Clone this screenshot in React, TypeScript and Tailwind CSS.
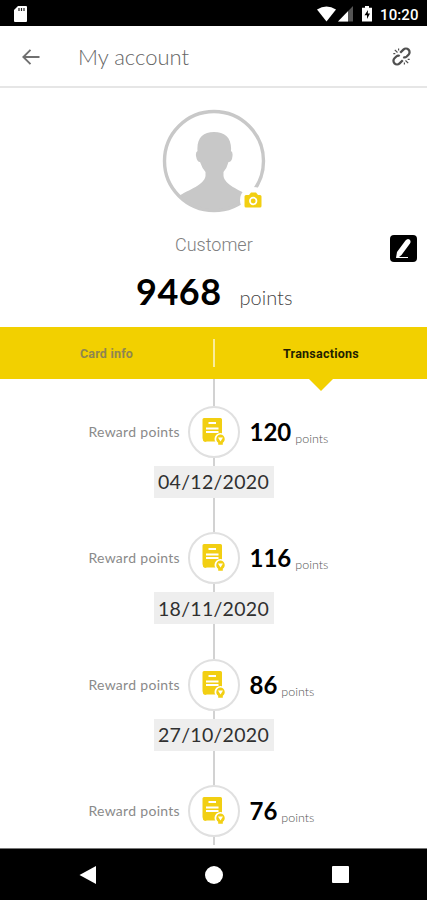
type Transaction = { points: number; date?: string };

const transactions: Transaction[] = [
  { points: 120, date: "04/12/2020" },
  { points: 116, date: "18/11/2020" },
  { points: 86, date: "27/10/2020" },
  { points: 76 },
];

function StatusBar() {
  return (
    <div className="flex h-[26px] shrink-0 items-center bg-black pl-[14px] pr-[8px] text-white">
      <svg width="13" height="16" viewBox="0 0 13 16" className="mt-[2px]">
        <path d="M4 0H12Q13 0 13 1V15Q13 16 12 16H1Q0 16 0 15V4Z" fill="#fff" />
        <path d="M5 2v3M7.5 2v3M10 2v3" stroke="#222" strokeWidth="1.2" />
      </svg>
      <svg width="56" height="17" viewBox="0 0 56 17" className="ml-auto mt-[2px]">
        <path d="M0 3.5Q9.5 -2.5 19 3.5L9.5 15.5Z" fill="#fff" />
        <path d="M36 0V15.5H21Z" fill="#555" />
        <path d="M31 5.2V15.5H21Z" fill="#fff" />
        <path d="M48 0h4v1.8h3V15.5H45V1.8h3Z" fill="#fff" />
        <path d="M51 4L47.5 9.3H50V13L53 7.6H50.8Z" fill="#000" />
      </svg>
      <span className="ml-[7px] mt-[3px] w-[39px] whitespace-nowrap font-['Roboto'] text-[15px] font-medium leading-[26px] tracking-[0.1px]">
        10:20
      </span>
    </div>
  );
}

function Header() {
  return (
    <header className="flex h-[62px] shrink-0 items-center border-b-2 border-[#e6e6e6] pl-[22px] pr-[15px] text-[#666]">
      <svg width="18" height="16" viewBox="0 0 18 16" fill="none" stroke="#707070" strokeWidth="1.9" className="mt-[2px]">
        <path d="M17.500 8H1.500M8.500 .8L1.300 8L8.500 15.200" />
      </svg>
      <h1 className="ml-[38px] mt-[2px] text-[22px] font-light leading-[30px]">My account</h1>
      <svg
        width="21"
        height="21"
        viewBox="0 0 21 21"
        fill="none"
        stroke="#505050"
        strokeWidth="2.3"
        className="ml-auto mt-[1px]"
      >
        <path d="M9.200 6.800L12.400 3.600A3.600 3.600 0 0 1 17.500 8.700L15.700 10.500Q14 12 12.300 11M11.800 14.200L8.600 17.400A3.600 3.600 0 0 1 3.500 12.300L5.300 10.500Q7 9 8.700 10" />
        <path d="M3.800 3.800L6.500 6.500M7.600 2.500V4.500M2.300 7.600H4.300M14.500 14.500L17.200 17.200M13.400 16.500V18.500M16.700 13.400H18.700" strokeWidth="1.2" />
      </svg>
    </header>
  );
}

function Avatar() {
  return (
    <svg width="104" height="104" viewBox="0 0 104 104" className="mx-auto block">
      <defs>
        <clipPath id="avatar">
          <circle cx="52" cy="52" r="50" />
        </clipPath>
      </defs>
      <path
        clipPath="url(#avatar)"
        fill="#c8c8c8"
        d="M52 23C63 23 70 29 69 42Q71 43 70.500 47Q70 53 66.500 53Q65 59 61.500 63V67C63 76 76 80 89 88V104H15V88C28 80 42 76 43.500 67V63Q40 59 38 53Q35 53 34 47Q33.500 43 35.500 42C34.500 29 41 23 52 23Z"
      />
      <circle cx="52" cy="52" r="49.500" fill="none" stroke="#c8c8c8" strokeWidth="3.400" />
      <circle cx="91" cy="91" r="13" fill="#fff" />
      <path d="M84 86h3l2-2.500h5l2 2.500h2q1.500 0 1.500 1.500V97q0 1.500-1.500 1.500H84q-1.500 0-1.500-1.500V87.500Q82.500 86 84 86Z" fill="#f2cf12" />
      <circle cx="91.200" cy="92" r="3.300" fill="none" stroke="#fff" strokeWidth="1.700" />
    </svg>
  );
}

function ReceiptIcon() {
  return (
    <svg width="24" height="28" viewBox="0 0 24 28">
      <path d="M2 0H18.500Q20 0 20 1.500V24L17 23.500H5L3 24Q0.500 23 0.500 20V1.500Q0.500 0 2 0Z" fill="#f2cf12" />
      <path d="M6.500 5H14M4 10.500H16.500M4 14H16.500" stroke="#fff" strokeWidth="2" />
      <circle cx="18.500" cy="21" r="6" fill="#fff" />
      <path d="M18.500 16.500a4.600 4.600 0 0 1 2.300 8.300v2h-4.600v-2a4.600 4.600 0 0 1 2.300-8.300Z" fill="#f2cf12" />
      <path d="M16 19.500h5L18.500 23.500Z" fill="#fff" />
    </svg>
  );
}

function TransactionRow({ points, date }: Transaction) {
  return (
    <div className="flex shrink-0 flex-col items-center">
      <div className="flex h-[52px] w-full items-center">
        <span className="w-[180px] text-right text-[14px] leading-[20px] tracking-[0.3px] text-[#8a8a8a]">Reward points</span>
        <div className="ml-[8px] flex size-[52px] items-center justify-center rounded-full border-2 border-[#e0e0e0] bg-white">
          <ReceiptIcon />
        </div>
        <div className="ml-[9.5px] flex items-baseline">
          <span className="text-[24px] font-bold leading-[30px] text-black">{points}</span>
          <span className="relative top-[2px] ml-[4px] text-[12.5px] font-light text-[#555]">points</span>
        </div>
      </div>
      <div className="h-[8px] w-[2px] bg-[#d2d2d2]" />
      {date && (
        <>
          <div className="flex h-[32px] w-[120px] items-center justify-center bg-[#eee] text-[19.5px] tracking-[0.3px] text-[#303030]">
            {date}
          </div>
          <div className="h-[34.3px] w-[2px] bg-[#d2d2d2]" />
        </>
      )}
    </div>
  );
}

function NavBar() {
  return (
    <div className="flex h-[52px] shrink-0 items-center justify-between border-t border-[#777] bg-black pl-[79px] pr-[78px]">
      <svg width="17" height="20" viewBox="0 0 17 20" fill="#fff">
        <path d="M17 1V19L0.500 10Z" />
      </svg>
      <div className="size-[18px] rounded-full bg-white" />
      <div className="size-[17px] rounded-[1px] bg-white" />
    </div>
  );
}

export default function App() {
  return (
    <div className="flex h-[900px] w-[427px] flex-col overflow-hidden bg-white font-['Lato',sans-serif]">
      <StatusBar />
      <Header />

      <section className="h-[239px] shrink-0 pt-[21px]">
        <Avatar />
        <div className="mt-[15px] flex h-[32px] items-center">
          <span className="ml-[175px] w-[80px] whitespace-nowrap font-['Roboto'] text-[18px] font-light text-[#808080]">
            Customer
          </span>
          <svg width="27" height="27" viewBox="0 0 27 27" className="ml-auto mr-[10px] mt-[9px]">
            <rect width="27" height="27" rx="4" fill="#000" />
            <path d="M15.500 5.500Q17.500 3 19.500 4.500Q21.500 6.500 19.800 8.800L11.500 20L9 22H18V23H6L7 17Z" fill="#fff" />
          </svg>
        </div>
        <div className="flex items-baseline pl-[136px] pt-[10px]">
          <span className="text-[36px] font-bold leading-[42px] tracking-[0.5px] text-black">9468</span>
          <span className="ml-[18px] text-[20px] font-light text-[#444]">points</span>
        </div>
      </section>

      <nav className="flex h-[52px] shrink-0 items-center bg-[#f2d000] font-['Roboto'] text-[12.5px] font-bold">
        <div className="w-[213px] pt-[2px] text-center tracking-[0.2px] text-[#8f8650]">Card info</div>
        <div className="h-[28px] w-[2px] bg-[#faec9a]" />
        <div className="relative flex h-full flex-1 items-center justify-center pt-[2px] tracking-[0.25px] text-[#231f00]">
          Transactions
          <svg width="26" height="13" viewBox="0 0 26 13" className="absolute left-[93px] top-[51px]">
            <path d="M0 0H26L13 13Z" fill="#f2d000" />
          </svg>
        </div>
      </nav>

      <main className="flex min-h-0 flex-1 flex-col overflow-hidden">
        <div className="mx-auto h-[27px] w-[2px] shrink-0 bg-[#d2d2d2]" />
        {transactions.map((transaction) => (
          <TransactionRow key={transaction.points} {...transaction} />
        ))}
      </main>
      <NavBar />
    </div>
  );
}
